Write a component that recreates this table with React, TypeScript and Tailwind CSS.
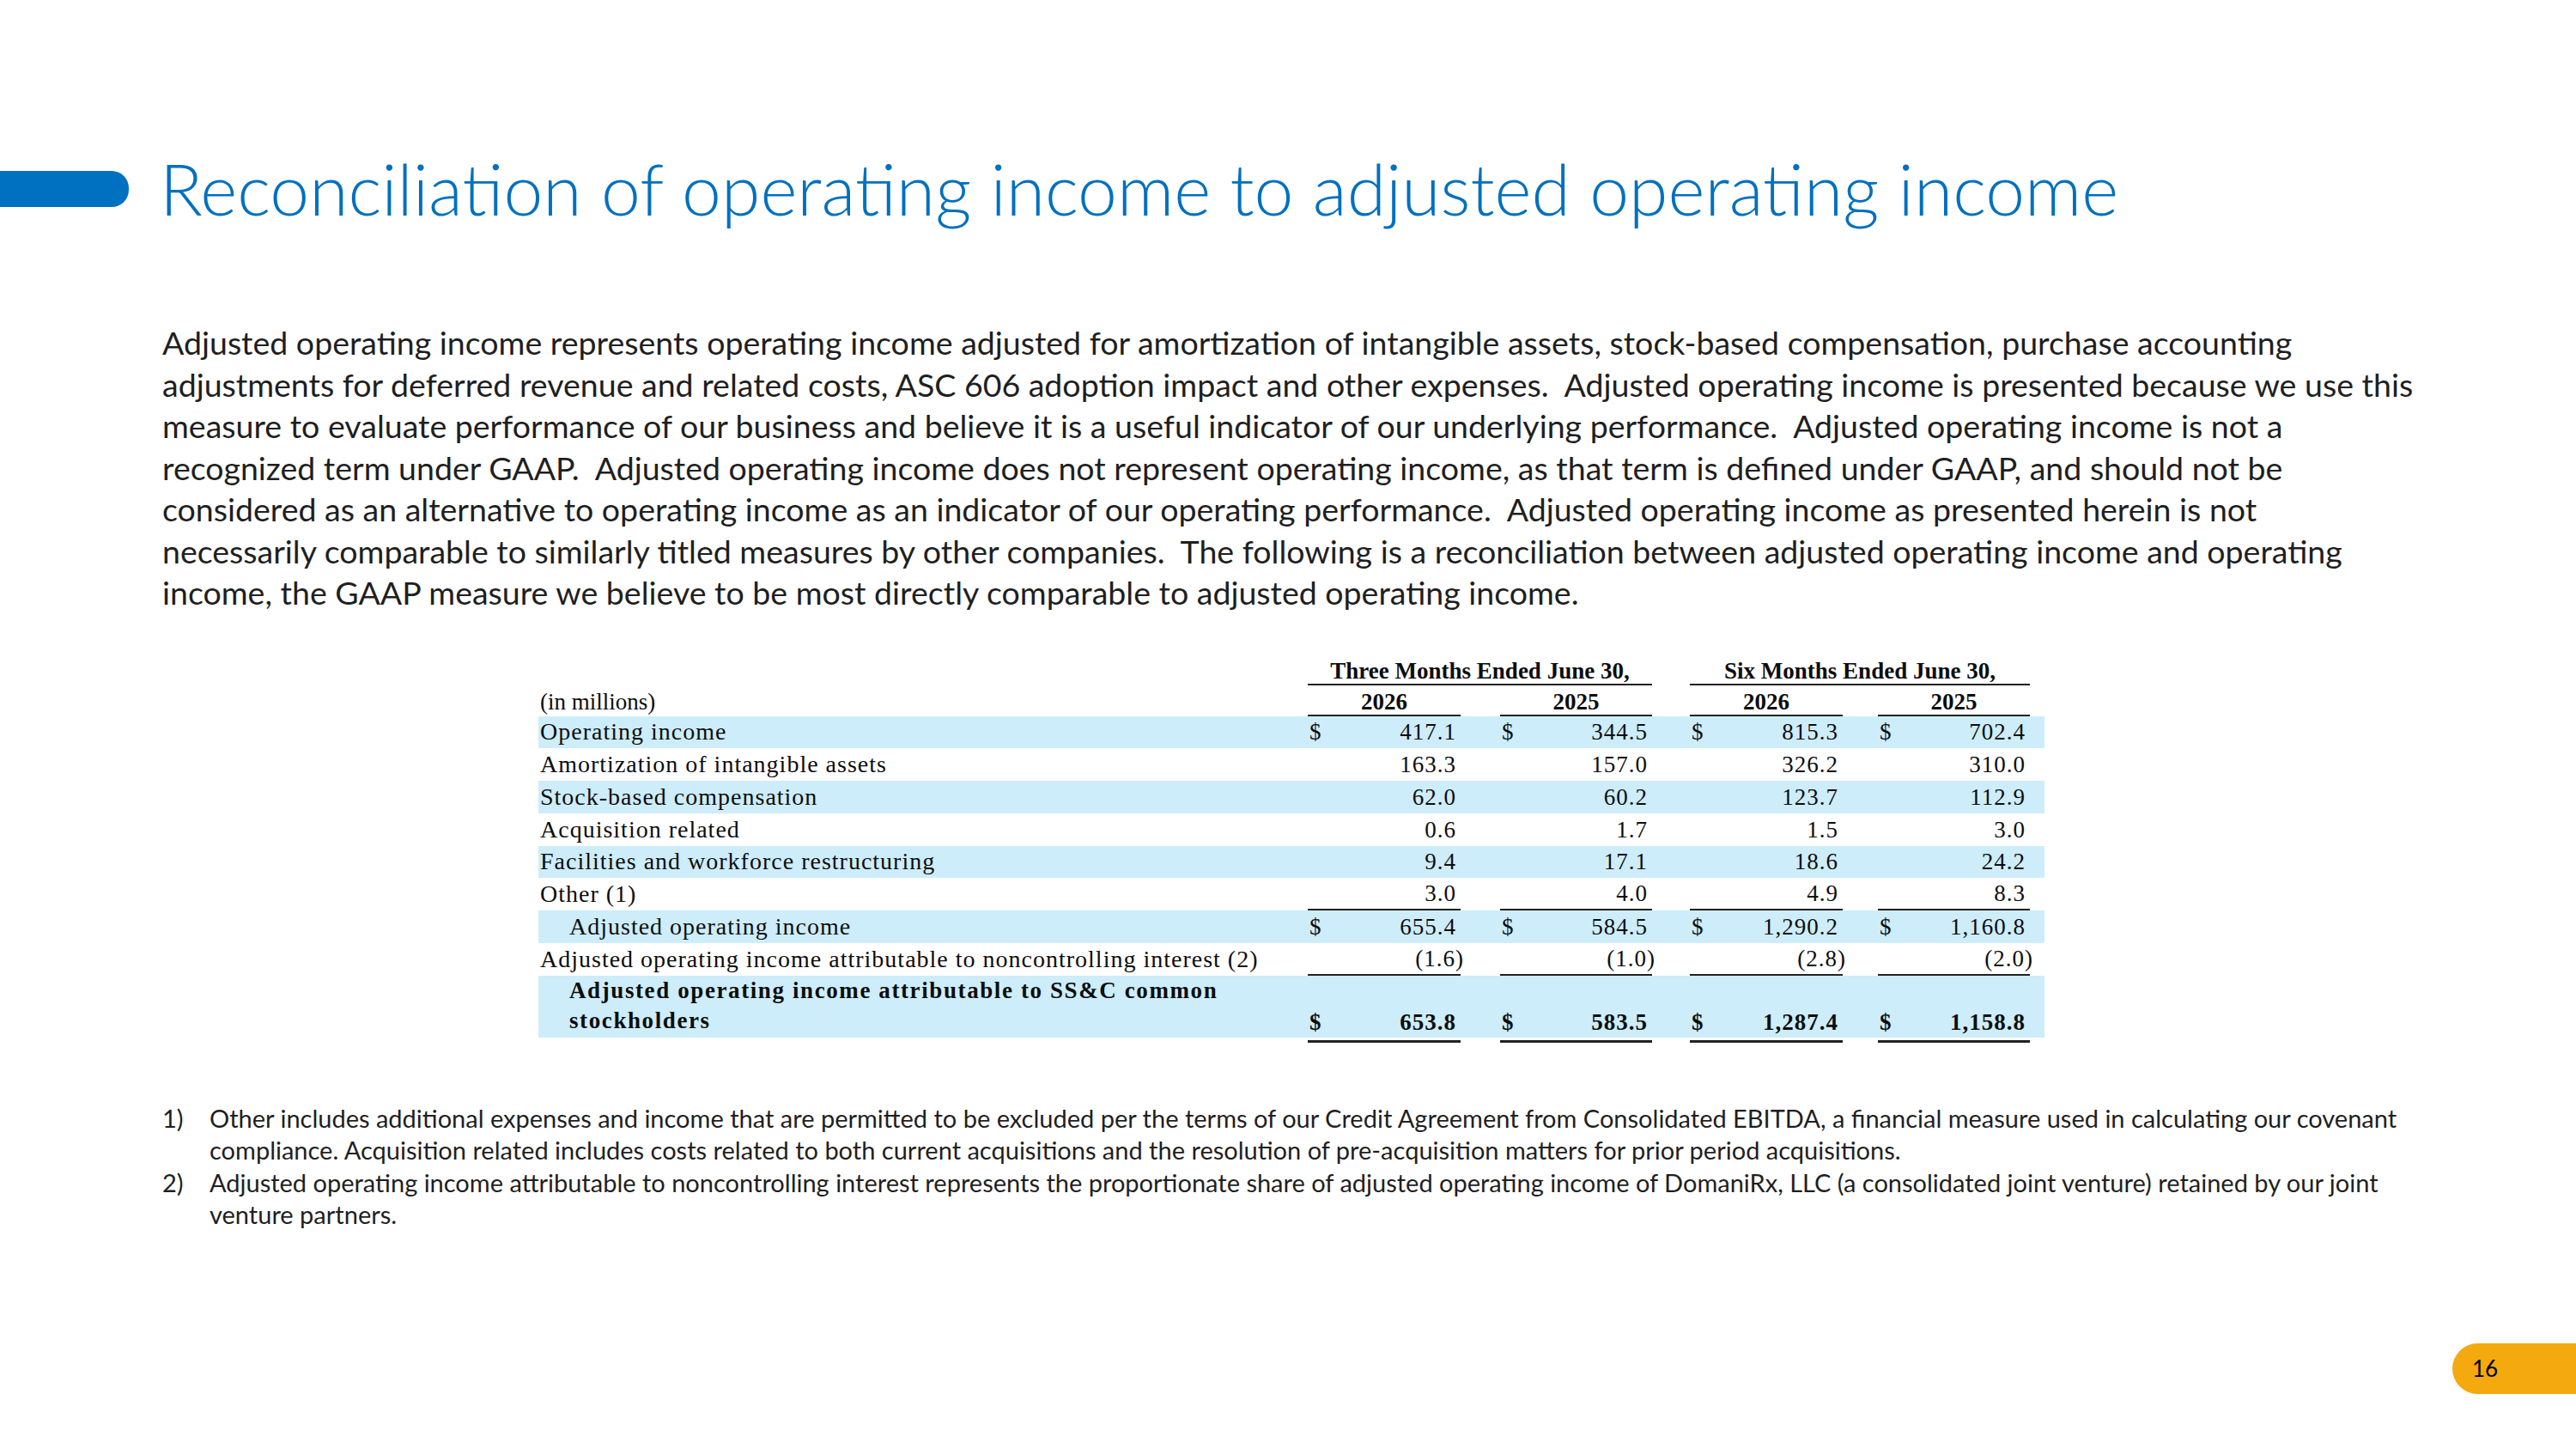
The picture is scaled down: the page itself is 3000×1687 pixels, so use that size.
import React from 'react';

// Paragraph lines, broken where the slide breaks them
const introLines = [
  'Adjusted operating income represents operating income adjusted for amortization of intangible assets, stock-based compensation, purchase accounting',
  'adjustments for deferred revenue and related costs, ASC 606 adoption impact and other expenses.  Adjusted operating income is presented because we use this',
  'measure to evaluate performance of our business and believe it is a useful indicator of our underlying performance.  Adjusted operating income is not a',
  'recognized term under GAAP.  Adjusted operating income does not represent operating income, as that term is defined under GAAP, and should not be',
  'considered as an alternative to operating income as an indicator of our operating performance.  Adjusted operating income as presented herein is not',
  'necessarily comparable to similarly titled measures by other companies.  The following is a reconciliation between adjusted operating income and operating',
  'income, the GAAP measure we believe to be most directly comparable to adjusted operating income.',
];

interface Row {
  label: string;
  vals: string[];
  band?: boolean;
  dollar?: boolean;
  indent?: boolean;
  underline?: boolean;
}

const rows: Row[] = [
  { label: 'Operating income', band: true, dollar: true, vals: ['417.1', '344.5', '815.3', '702.4'] },
  { label: 'Amortization of intangible assets', vals: ['163.3', '157.0', '326.2', '310.0'] },
  { label: 'Stock-based compensation', band: true, vals: ['62.0', '60.2', '123.7', '112.9'] },
  { label: 'Acquisition related', vals: ['0.6', '1.7', '1.5', '3.0'] },
  { label: 'Facilities and workforce restructuring', band: true, vals: ['9.4', '17.1', '18.6', '24.2'] },
  { label: 'Other (1)', underline: true, vals: ['3.0', '4.0', '4.9', '8.3'] },
  { label: 'Adjusted operating income', band: true, dollar: true, indent: true, vals: ['655.4', '584.5', '1,290.2', '1,160.8'] },
  {
    label: 'Adjusted operating income attributable to noncontrolling interest (2)',
    underline: true,
    vals: ['(1.6)', '(1.0)', '(2.8)', '(2.0)'],
  },
];

const gridCols = 'grid grid-cols-[896px_178px_46px_177px_44px_178px_41px_177px_17px]';

const Num = ({ v, dollar, underline }: { v: string; dollar?: boolean; underline?: boolean }) => {
  const neg = v.startsWith('(');
  return (
    <div
      className={`flex items-center justify-between pl-[2px] pr-[5px] ${
        underline ? 'border-b-2 border-[#222]' : ''
      }`}
    >
      <span>{dollar ? '$' : ''}</span>
      <span>
        {neg ? (
          <>
            {v.slice(0, -1)}
            <span className="-mr-[9px]">)</span>
          </>
        ) : (
          v
        )}
      </span>
    </div>
  );
};

const ReconTable = () => (
  <div className="w-[1754px] ml-[627px] font-['Liberation_Serif',serif] text-[27px] tracking-[1px] leading-[30px] text-[#0d0d0d]">
    {/* period headers */}
    <div className={`${gridCols} h-[36px]`}>
      <div />
      <div className="col-span-3 flex items-end justify-center font-bold tracking-normal border-b-2 border-[#222]">
        Three Months Ended June 30,
      </div>
      <div />
      <div className="col-span-3 flex items-end justify-center font-bold tracking-normal border-b-2 border-[#222]">
        Six Months Ended June 30,
      </div>
      <div />
    </div>

    {/* year headers */}
    <div className={`${gridCols} h-[36px]`}>
      <div className="flex items-end pl-[2px] pb-[2px] tracking-normal">(in millions)</div>
      <div className="flex items-end justify-center font-bold tracking-normal border-b-2 border-[#222]">2026</div>
      <div />
      <div className="flex items-end justify-center font-bold tracking-normal border-b-2 border-[#222]">2025</div>
      <div />
      <div className="flex items-end justify-center font-bold tracking-normal border-b-2 border-[#222]">2026</div>
      <div />
      <div className="flex items-end justify-center font-bold tracking-normal border-b-2 border-[#222]">2025</div>
      <div />
    </div>

    {rows.map((r) => (
      <div key={r.label} className={`${gridCols} h-[37.75px] ${r.band ? 'bg-[#cdedfa]' : ''}`}>
        <div className={`flex items-center text-[28px] ${r.indent ? 'pl-[36px]' : 'pl-[2px]'}`}>{r.label}</div>
        <Num v={r.vals[0]} dollar={r.dollar} underline={r.underline} />
        <div />
        <Num v={r.vals[1]} dollar={r.dollar} underline={r.underline} />
        <div />
        <Num v={r.vals[2]} dollar={r.dollar} underline={r.underline} />
        <div />
        <Num v={r.vals[3]} dollar={r.dollar} underline={r.underline} />
        <div />
      </div>
    ))}

    {/* total attributable to common stockholders */}
    <div className={`${gridCols} h-[72px] bg-[#cdedfa] font-bold`}>
      <div className="flex items-end pl-[36px] pb-[2px] leading-[35px] tracking-[1.6px]">
        Adjusted operating income attributable to SS&amp;C common
        <br />
        stockholders
      </div>
      {['653.8', '583.5', '1,287.4', '1,158.8'].map((v) => (
        <React.Fragment key={v}>
          <div className="flex items-end justify-between pl-[2px] pr-[5px] pb-[3px]">
            <span>$</span>
            <span>{v}</span>
          </div>
          <div />
        </React.Fragment>
      ))}
    </div>
    <div className={`${gridCols} h-[6px]`}>
      <div />
      <div className="border-b-[3px] border-[#222]" />
      <div />
      <div className="border-b-[3px] border-[#222]" />
      <div />
      <div className="border-b-[3px] border-[#222]" />
      <div />
      <div className="border-b-[3px] border-[#222]" />
      <div />
    </div>
  </div>
);

export default function App() {
  return (
    <div className="w-[3000px] h-[1687px] bg-white flex flex-col font-['Lato',sans-serif] text-[#1f1f1f] overflow-hidden">
      {/* Title */}
      <div className="flex items-center mt-[172px]">
        <div className="w-[150px] h-[42px] bg-[#0070c0] rounded-r-[20px] shrink-0" />
        <h1 className="ml-[36px] text-[82.3px] leading-[96px] font-light text-[#0070c0] whitespace-nowrap">
          Reconciliation of operating income to adjusted operating income
        </h1>
      </div>

      {/* Intro paragraph */}
      <div className="mt-[107px] pl-[189px] text-[37.5px] leading-[48.5px]">
        {introLines.map((l) => (
          <div key={l} className="whitespace-pre">
            {l}
          </div>
        ))}
      </div>

      <div className="mt-[47px]">
        <ReconTable />
      </div>

      {/* Footnotes */}
      <div className="mt-[69px] pl-[189px] text-[29px] leading-[37.5px]">
        <div className="flex">
          <span className="w-[55px] shrink-0">1)</span>
          <div>
            <div className="whitespace-nowrap">
              Other includes additional expenses and income that are permitted to be excluded per the terms of our Credit Agreement from Consolidated EBITDA, a financial measure used in calculating our covenant
            </div>
            <div className="whitespace-nowrap">
              compliance. Acquisition related includes costs related to both current acquisitions and the resolution of pre-acquisition matters for prior period acquisitions.
            </div>
          </div>
        </div>
        <div className="flex">
          <span className="w-[55px] shrink-0">2)</span>
          <div>
            <div className="whitespace-nowrap">
              Adjusted operating income attributable to noncontrolling interest represents the proportionate share of adjusted operating income of DomaniRx, LLC (a consolidated joint venture) retained by our joint
            </div>
            <div className="whitespace-nowrap">venture partners.</div>
          </div>
        </div>
      </div>

      {/* Page number */}
      <div className="mt-auto mb-[64px] self-end w-[144px] h-[59px] bg-[#f4a90f] rounded-l-full flex items-center pl-[23px] text-[26px] text-black">
        16
      </div>
    </div>
  );
}
